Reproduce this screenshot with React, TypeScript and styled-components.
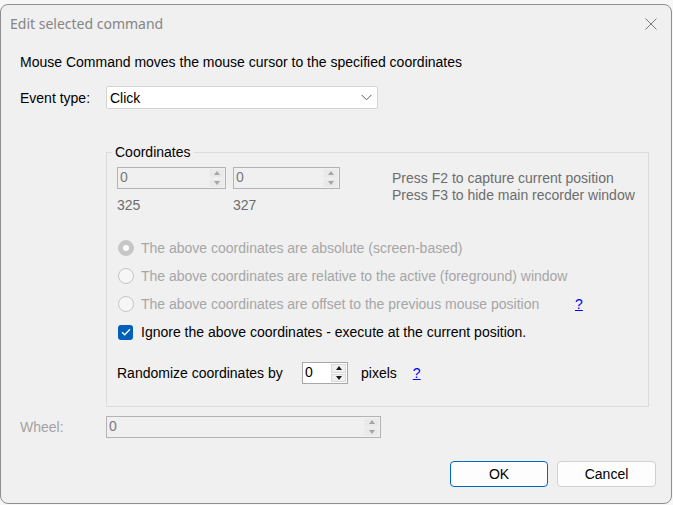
import React from "react";
import styled, { createGlobalStyle } from "styled-components";

const Global = createGlobalStyle`
  html, body { margin: 0; padding: 0; background: #f7f7f7; }
  body { font-family: "Liberation Sans", Arial, sans-serif; font-size: 14px; color: #000; }
  * { box-sizing: border-box; }
`;

const Window = styled.div`
  margin: 4px 1px 0 0;
  height: 500px;
  border: 1px solid #8e8e8e;
  border-radius: 8px;
  background: #f0f0f0;
  display: flex;
  flex-direction: column;
  overflow: hidden;
`;

const TitleBar = styled.div`
  height: 37px;
  display: flex;
  align-items: center;
  justify-content: space-between;
  padding: 0 14px 0 9px;
`;

const Title = styled.span`
  font-family: "Segoe UI", "Noto Sans", sans-serif;
  font-size: 14px;
  color: #858585;
`;

const CloseIcon = styled.svg`
  width: 12px;
  height: 12px;
  display: block;
`;

const Body = styled.div`
  display: flex;
  flex-direction: column;
  padding: 0 15px 0 19px;
`;

const Text = styled.div<{ $color?: string }>`
  line-height: 16px;
  color: ${(p) => p.$color || "#000"};
  white-space: nowrap;
`;

const Description = styled(Text)`
  margin-top: 12px;
`;

const FormRow = styled.div<{ $mt: number }>`
  display: flex;
  align-items: center;
  margin-top: ${(p) => p.$mt}px;
`;

const FieldLabel = styled.span<{ $disabled?: boolean }>`
  width: 86px;
  line-height: 16px;
  color: ${(p) => (p.$disabled ? "#a3a3a3" : "#000")};
`;

const Select = styled.div`
  width: 272px;
  height: 23px;
  background: #fff;
  border: 1px solid #d4d4d4;
  border-radius: 2px;
  display: flex;
  align-items: center;
  justify-content: space-between;
  padding: 0 5px 0 3px;
  line-height: 16px;
`;

const Group = styled.fieldset`
  margin: 35px 0 0 86px;
  width: 543px;
  border: 1px solid #dcdcdc;
  padding: 7px 0 22px 10px;
  min-inline-size: 0;
`;

const Legend = styled.legend`
  margin-left: -5px;
  padding: 0 3px;
  line-height: 16px;
  color: #000;
`;

const CoordRow = styled.div`
  display: flex;
  align-items: flex-start;
`;

const CoordCol = styled.div<{ $mr: number }>`
  display: flex;
  flex-direction: column;
  margin-right: ${(p) => p.$mr}px;
`;

const CoordValue = styled(Text)`
  margin-top: 8px;
  color: #6d6d6d;
`;

const Hints = styled.div`
  margin-left: 52px;
  padding-top: 3px;
  color: #6d6d6d;
  line-height: 17px;
  white-space: nowrap;
`;

const Spin = styled.div<{ $w: number; $disabled?: boolean }>`
  width: ${(p) => p.$w}px;
  height: 22px;
  display: flex;
  border: 1px solid ${(p) => (p.$disabled ? "#b4b4b4" : "#a8a8a8")};
  background: ${(p) => (p.$disabled ? "#f0f0f0" : "#fff")};
`;

const SpinValue = styled.span<{ $disabled?: boolean }>`
  flex: 1;
  padding-left: 2px;
  line-height: 18px;
  font-size: 14px;
  color: ${(p) => (p.$disabled ? "#7a7a7a" : "#000")};
`;

const SpinButtons = styled.div`
  width: 16px;
  display: flex;
  flex-direction: column;
  gap: 1px;
  padding: 1px 1px 1px 0;
`;

const SpinButton = styled.div<{ $disabled?: boolean }>`
  flex: 1;
  display: flex;
  align-items: center;
  justify-content: center;
  background: ${(p) => (p.$disabled ? "#e9e9e9" : "#f0f0f0")};
  border: 1px solid ${(p) => (p.$disabled ? "#ececec" : "#dadada")};
`;

const Arrow = styled.span<{ $up?: boolean; $disabled?: boolean }>`
  width: 0;
  height: 0;
  border-left: 3.5px solid transparent;
  border-right: 3.5px solid transparent;
  ${(p) =>
    p.$up
      ? `border-bottom: 4px solid ${p.$disabled ? "#a5a5a5" : "#1a1a1a"};`
      : `border-top: 4px solid ${p.$disabled ? "#a5a5a5" : "#1a1a1a"};`}
`;

const OptionList = styled.div`
  display: flex;
  flex-direction: column;
  margin-top: 21px;
`;

const OptionRow = styled.div`
  height: 28px;
  display: flex;
  align-items: center;
  padding-left: 1px;
`;

const Radio = styled.span<{ $checked?: boolean }>`
  width: 16px;
  height: 16px;
  border-radius: 50%;
  border: 1px solid #c6c6c6;
  background: ${(p) => (p.$checked ? "#c6c6c6" : "#f6f6f6")};
  display: flex;
  align-items: center;
  justify-content: center;
  margin-right: 7px;
  flex: none;
  &::after {
    content: "";
    display: ${(p) => (p.$checked ? "block" : "none")};
    width: 6px;
    height: 6px;
    border-radius: 50%;
    background: #fff;
  }
`;

const Checkbox = styled.span`
  width: 15px;
  height: 15px;
  border-radius: 3px;
  background: #005fb8;
  display: flex;
  align-items: center;
  justify-content: center;
  margin: 0 8px 0 0;
  flex: none;
`;

const OptionText = styled.span<{ $disabled?: boolean; $w?: number }>`
  line-height: 16px;
  white-space: nowrap;
  color: ${(p) => (p.$disabled ? "#a6a6a6" : "#000")};
  ${(p) => (p.$w ? `width: ${p.$w}px;` : "")}
`;

const HelpLink = styled.a`
  color: #0000ee;
  text-decoration: underline;
  line-height: 16px;
  cursor: pointer;
`;

const RandomRow = styled.div`
  display: flex;
  align-items: center;
  margin-top: 16px;
`;

const RandomLabel = styled.span`
  width: 185px;
  line-height: 16px;
`;

const Pixels = styled.span`
  margin: 0 16px 0 13px;
  line-height: 16px;
`;

const ButtonRow = styled.div`
  display: flex;
  justify-content: flex-end;
  gap: 9px;
  margin-top: 23px;
`;

const Button = styled.button<{ $primary?: boolean; $w: number }>`
  width: ${(p) => p.$w}px;
  height: 26px;
  border-radius: 4px;
  background: #fdfdfd;
  border: 1px solid ${(p) => (p.$primary ? "#0067c0" : "#d0d0d0")};
  font-family: "Liberation Sans", Arial, sans-serif;
  font-size: 14px;
  color: #000;
  padding: 0;
`;

function SpinBox({ w, value, disabled }: { w: number; value: string; disabled?: boolean }) {
  return (
    <Spin $w={w} $disabled={disabled}>
      <SpinValue $disabled={disabled}>{value}</SpinValue>
      <SpinButtons>
        <SpinButton $disabled={disabled}>
          <Arrow $up $disabled={disabled} />
        </SpinButton>
        <SpinButton $disabled={disabled}>
          <Arrow $disabled={disabled} />
        </SpinButton>
      </SpinButtons>
    </Spin>
  );
}

export default function App() {
  return (
    <>
      <Global />
      <Window>
        <TitleBar>
          <Title>Edit selected command</Title>
          <CloseIcon viewBox="0 0 12 12">
            <path d="M0.5 0.5 L11.5 11.5 M11.5 0.5 L0.5 11.5" stroke="#7c7c7c" strokeWidth="1" fill="none" />
          </CloseIcon>
        </TitleBar>
        <Body>
          <Description>Mouse Command moves the mouse cursor to the specified coordinates</Description>
          <FormRow $mt={16}>
            <FieldLabel>Event type:</FieldLabel>
            <Select>
              <span>Click</span>
              <svg width="11" height="7" viewBox="0 0 11 7">
                <path d="M0.5 0.8 L5.5 5.8 L10.5 0.8" stroke="#5a5a5a" strokeWidth="1" fill="none" />
              </svg>
            </Select>
          </FormRow>
          <Group>
            <Legend>Coordinates</Legend>
            <CoordRow>
              <CoordCol $mr={7}>
                <SpinBox w={109} value="0" disabled />
                <CoordValue>325</CoordValue>
              </CoordCol>
              <CoordCol $mr={0}>
                <SpinBox w={107} value="0" disabled />
                <CoordValue>327</CoordValue>
              </CoordCol>
              <Hints>
                Press F2 to capture current position
                <br />
                Press F3 to hide main recorder window
              </Hints>
            </CoordRow>
            <OptionList>
              <OptionRow>
                <Radio $checked />
                <OptionText $disabled>The above coordinates are absolute (screen-based)</OptionText>
              </OptionRow>
              <OptionRow>
                <Radio />
                <OptionText $disabled>The above coordinates are relative to the active (foreground) window</OptionText>
              </OptionRow>
              <OptionRow>
                <Radio />
                <OptionText $disabled $w={434}>
                  The above coordinates are offset to the previous mouse position
                </OptionText>
                <HelpLink>?</HelpLink>
              </OptionRow>
              <OptionRow>
                <Checkbox>
                  <svg width="10" height="8" viewBox="0 0 10 8">
                    <path d="M1 4.2 L3.7 6.8 L9 1.2" stroke="#fff" strokeWidth="1.3" fill="none" />
                  </svg>
                </Checkbox>
                <OptionText>Ignore the above coordinates - execute at the current position.</OptionText>
              </OptionRow>
            </OptionList>
            <RandomRow>
              <RandomLabel>Randomize coordinates by</RandomLabel>
              <SpinBox w={46} value="0" />
              <Pixels>pixels</Pixels>
              <HelpLink>?</HelpLink>
            </RandomRow>
          </Group>
          <FormRow $mt={9}>
            <FieldLabel $disabled>Wheel:</FieldLabel>
            <SpinBox w={275} value="0" disabled />
          </FormRow>
          <ButtonRow>
            <Button $primary $w={98}>OK</Button>
            <Button $w={99}>Cancel</Button>
          </ButtonRow>
        </Body>
      </Window>
    </>
  );
}
